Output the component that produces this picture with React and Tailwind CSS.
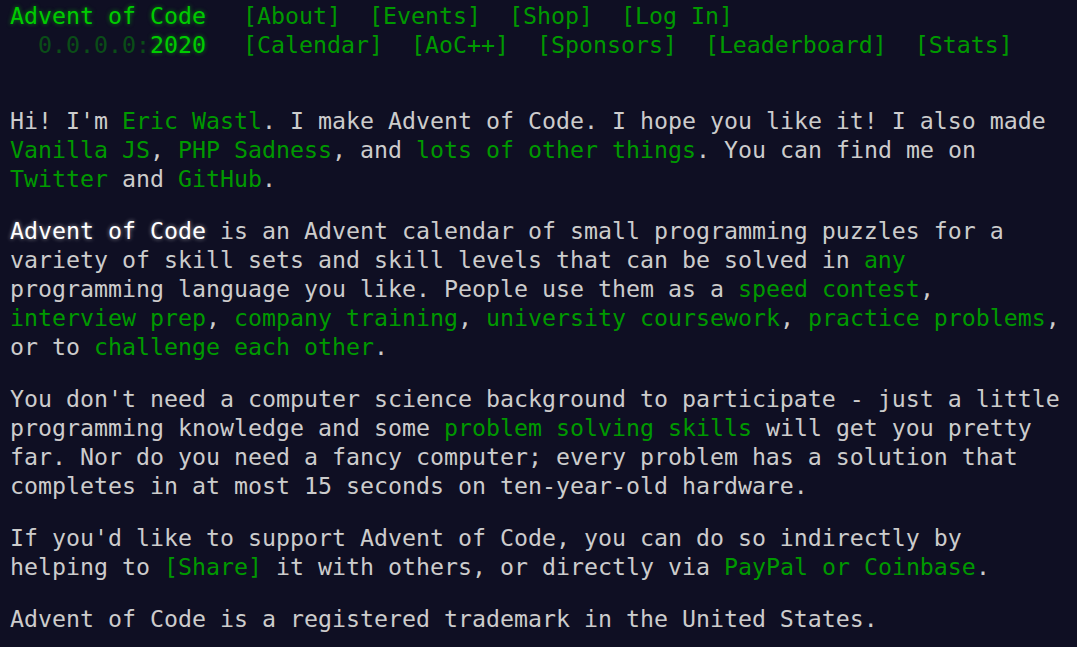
import React from 'react';

const A = ({ children }) => (
    <a href="#" className="text-[#009900] no-underline hover:text-[#99ff99]">{children}</a>
);

const NavItem = ({ label }) => (
    <a href="#" className="text-[#009900] hover:text-[#99ff99] whitespace-pre">[{label}]</a>
);

const App = () => {
    const glow = '[text-shadow:0_0_4px_rgba(0,204,0,0.6)]';

    return (
        <div className="min-h-screen bg-[#0f0f23] text-[#cccccc] font-['DejaVu_Sans_Mono',monospace] text-[23.25px] leading-[29px] pl-[10px] pt-[1px]">
            <header>
                <div className="flex">
                    <h1 className={`w-[14ch] text-[#00cc00] ${glow} whitespace-pre`}>Advent of Code</h1>
                    <nav className="ml-[37px] flex gap-[2ch]">
                        <NavItem label="About" />
                        <NavItem label="Events" />
                        <NavItem label="Shop" />
                        <NavItem label="Log In" />
                    </nav>
                </div>
                <div className="flex">
                    <h1 className="w-[14ch] text-right whitespace-pre">
                        <span className="text-[#00cc00] opacity-[0.33]">0.0.0.0:</span>
                        <span className={`text-[#00cc00] ${glow}`}>2020</span>
                    </h1>
                    <nav className="ml-[37px] flex gap-[2ch]">
                        <NavItem label="Calendar" />
                        <NavItem label="AoC++" />
                        <NavItem label="Sponsors" />
                        <NavItem label="Leaderboard" />
                        <NavItem label="Stats" />
                    </nav>
                </div>
            </header>

            <main className="mt-[47px] max-w-[75.5ch] flex flex-col gap-[23px]">
                <p>
                    Hi! I'm <A>Eric Wastl</A>. I make Advent of Code. I hope you like it! I also made{' '}
                    <A>Vanilla JS</A>, <A>PHP Sadness</A>, and <A>lots of other things</A>. You can find me on{' '}
                    <A>Twitter</A> and <A>GitHub</A>.
                </p>
                <p>
                    <span className="text-white [text-shadow:0_0_4px_rgba(255,255,255,0.55)]">Advent of Code</span> is an Advent calendar of small programming puzzles for a variety of skill sets and skill levels that can be solved in{' '}
                    <A>any</A> programming language you like. People use them as a <A>speed contest</A>,{' '}
                    <A>interview prep</A>, <A>company training</A>, <A>university coursework</A>, <A>practice problems</A>, or to{' '}
                    <A>challenge each other</A>.
                </p>
                <p>
                    You don't need a computer science background to participate - just a little programming knowledge and some{' '}
                    <A>problem solving skills</A> will get you pretty far. Nor do you need a fancy computer; every problem has a solution that completes in at most 15 seconds on ten-year-old hardware.
                </p>
                <p>
                    If you'd like to support Advent of Code, you can do so indirectly by helping to <A>[Share]</A> it with others, or directly via{' '}
                    <A>PayPal or Coinbase</A>.
                </p>
                <p>Advent of Code is a registered trademark in the United States.</p>
            </main>
        </div>
    );
};

export default App;
